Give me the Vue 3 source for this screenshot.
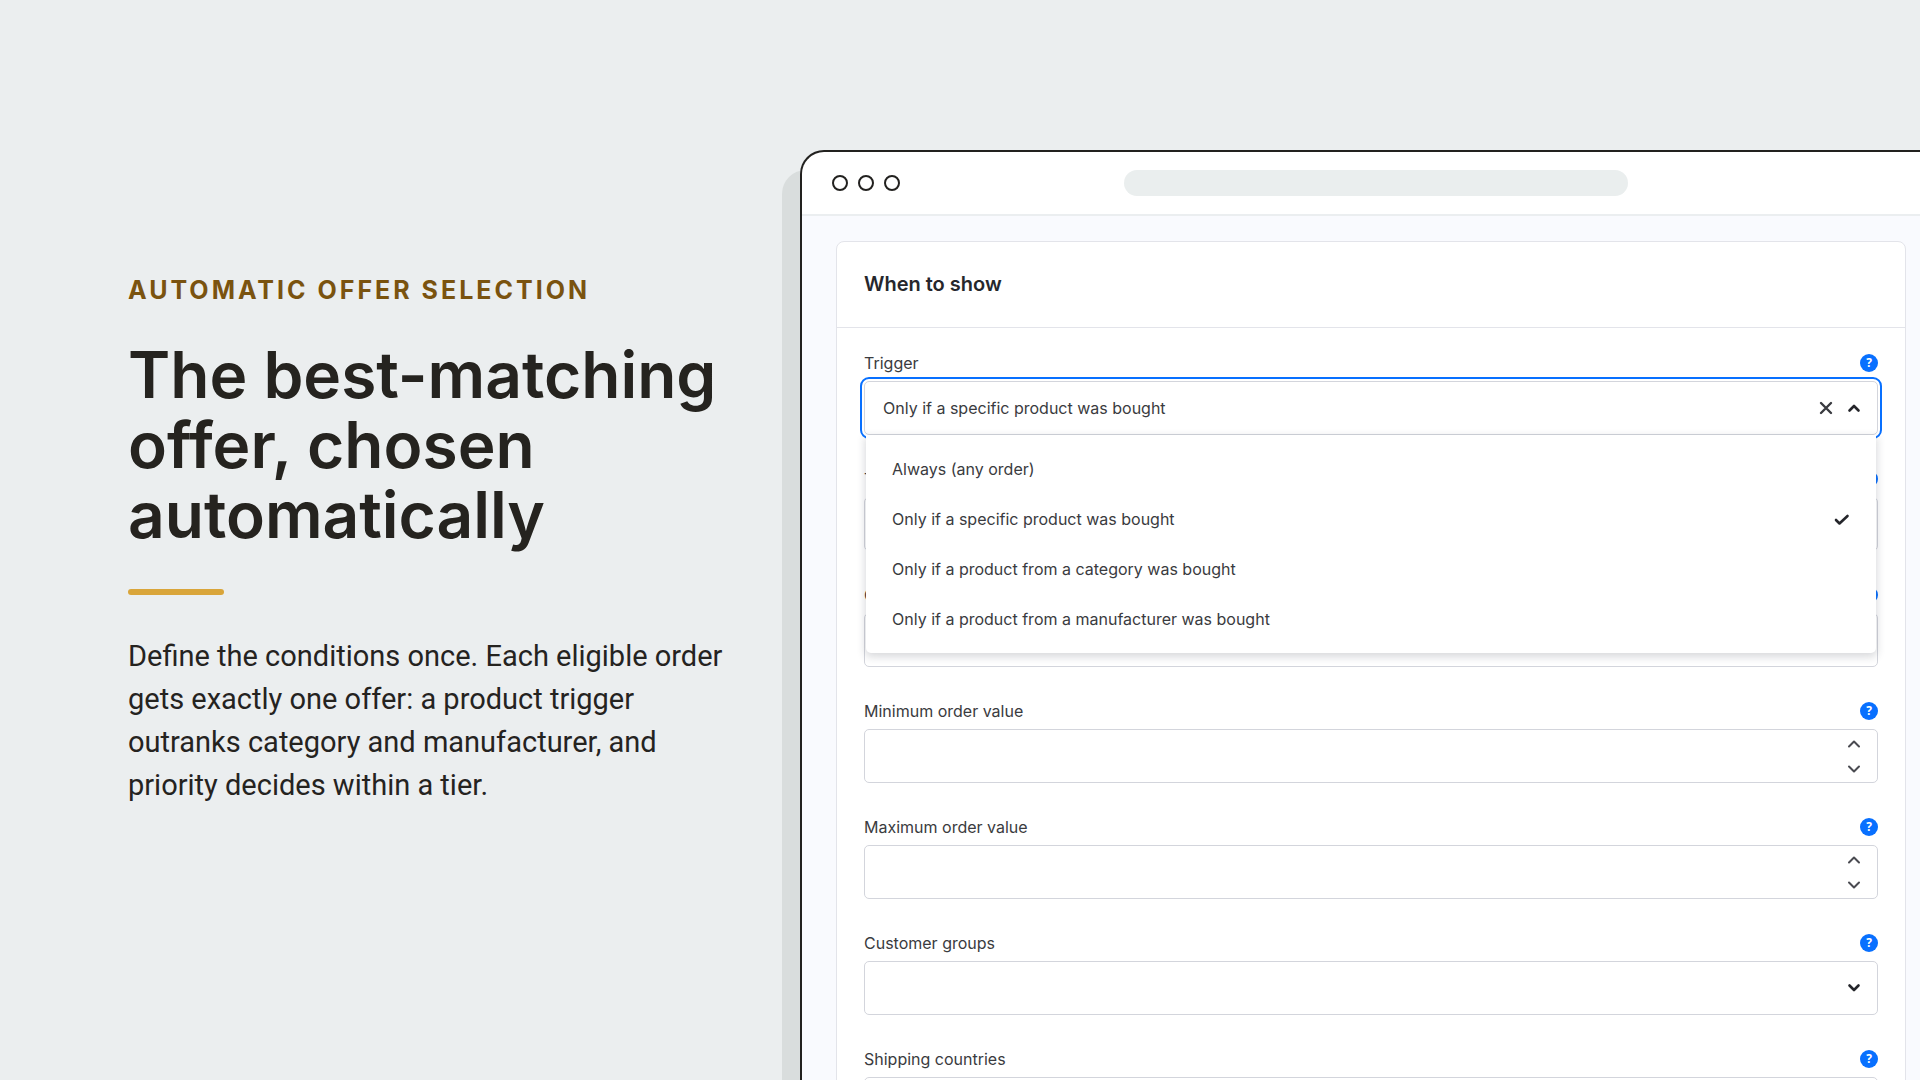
<template>
  <main class="slide">
    <section class="intro">
      <p class="eyebrow">AUTOMATIC OFFER SELECTION</p>
      <h1 class="headline">The best-matching<br />offer, chosen<br />automatically</h1>
      <div class="accent"></div>
      <p class="summary">
        Define the conditions once. Each eligible order<br />
        gets exactly one offer: a product trigger<br />
        outranks category and manufacturer, and<br />
        priority decides within a tier.
      </p>
    </section>

    <section class="browser">
      <header class="browser-bar">
        <div class="dots">
          <span v-for="n in 3" :key="n" class="dot"></span>
        </div>
        <div class="address"></div>
      </header>

      <div class="browser-body">
        <form class="card" @submit.prevent>
          <h2 class="card-title">When to show</h2>

          <div class="fields">
            <div v-for="field in fields" :key="field.id" class="field">
              <div class="field-head">
                <label :for="field.id">{{ field.label }}</label>
                <button type="button" class="help" :aria-label="'Help: ' + field.label">?</button>
              </div>

              <div class="control" :class="{ focused: field.id === 'trigger' }">
                <select v-if="field.type === 'trigger'" :id="field.id" v-model="trigger" class="input">
                  <option v-for="option in options" :key="option" :value="option">{{ option }}</option>
                </select>
                <select v-else-if="field.type === 'select'" :id="field.id" class="input"></select>
                <input v-else :id="field.id" type="text" inputmode="decimal" class="input" />

                <div v-if="field.type === 'trigger'" class="icons">
                  <button type="button" class="icon-btn" aria-label="Clear" @click="trigger = ''">
                    <svg width="16" height="16" viewBox="0 0 16 16"><path class="bold" d="M3 3l10 10M13 3L3 13" /></svg>
                  </button>
                  <button type="button" class="icon-btn" aria-label="Toggle options" @click="open = !open">
                    <svg width="16" height="16" viewBox="0 0 16 16"><path class="heavy" d="M3.5 10.5L8 6l4.5 4.5" /></svg>
                  </button>
                </div>
                <div v-else-if="field.type === 'select'" class="icons">
                  <svg width="16" height="16" viewBox="0 0 16 16"><path class="heavy" d="M3.5 5.5L8 10l4.5-4.5" /></svg>
                </div>
                <div v-else class="icons stepper">
                  <button type="button" class="icon-btn" aria-label="Increase">
                    <svg width="16" height="16" viewBox="0 0 16 16"><path d="M3 10.5l5-5 5 5" /></svg>
                  </button>
                  <button type="button" class="icon-btn" aria-label="Decrease">
                    <svg width="16" height="16" viewBox="0 0 16 16"><path d="M3 5.5l5 5 5-5" /></svg>
                  </button>
                </div>

                <ul v-if="field.type === 'trigger' && open" class="menu" role="listbox">
                  <li
                    v-for="option in options"
                    :key="option"
                    class="menu-item"
                    role="option"
                    :aria-selected="option === trigger"
                    @click="choose(option)"
                  >
                    {{ option }}
                    <svg v-if="option === trigger" width="16" height="16" viewBox="0 0 16 16">
                      <path class="heavy" d="M2 9l3.500 3.500L13.500 5" />
                    </svg>
                  </li>
                </ul>
              </div>
            </div>
          </div>
        </form>
      </div>
    </section>
  </main>
</template>

<script setup>
import { ref } from 'vue'

const options = [
  'Always (any order)',
  'Only if a specific product was bought',
  'Only if a product from a category was bought',
  'Only if a product from a manufacturer was bought',
]

const fields = [
  { id: 'trigger', label: 'Trigger', type: 'trigger' },
  { id: 'trigger-products', label: 'Trigger products', type: 'select' },
  { id: 'currency', label: 'Currency', type: 'select' },
  { id: 'min-value', label: 'Minimum order value', type: 'number' },
  { id: 'max-value', label: 'Maximum order value', type: 'number' },
  { id: 'customer-groups', label: 'Customer groups', type: 'select' },
  { id: 'countries', label: 'Shipping countries', type: 'select' },
]

const trigger = ref(options[1])
const open = ref(true)

const choose = (option) => {
  trigger.value = option
  open.value = false
}
</script>

<style>
body {
  background: #ebeeef;
}
</style>

<style scoped>
.slide {
  display: flex;
  height: 100vh;
  overflow: hidden;
  background: #ebeeef;
  color: #25231f;
  font-family: Inter, "Liberation Sans", sans-serif;
}

.intro {
  flex: 0 0 800px;
  box-sizing: border-box;
  padding-left: 128px;
  display: flex;
  flex-direction: column;
  justify-content: center;
  white-space: nowrap;
}

.eyebrow {
  margin: 0;
  color: #7a530f;
  font-size: 25px;
  line-height: 32px;
  font-weight: 700;
  letter-spacing: 3px;
}

.headline {
  margin: 34px 0 0;
  font-size: 64px;
  line-height: 70px;
  font-weight: 600;
}

.accent {
  width: 96px;
  height: 6px;
  margin: 39px 0 40px;
  border-radius: 3px;
  background: #d9a53a;
}

.summary {
  margin: 0;
  font-family: Roboto, "Liberation Sans", sans-serif;
  font-size: 29px;
  line-height: 43px;
}

.browser {
  flex: 1;
  min-width: 0;
  margin-top: 150px;
  border: 2px solid #22211f;
  border-width: 2px 0 0 2px;
  border-top-left-radius: 24px;
  background: #fff;
  box-shadow: -18px 20px 0 #d9dddd;
}

.browser-bar {
  display: flex;
  align-items: center;
  height: 62px;
  padding: 0 68px 0 30px;
  border-bottom: 2px solid #ebeef0;
}

.dots {
  display: flex;
  gap: 10px;
}

.dot {
  box-sizing: border-box;
  width: 16px;
  height: 16px;
  border: 2px solid #22211f;
  border-radius: 50%;
}

.address {
  width: 504px;
  height: 26px;
  margin: 0 auto;
  border-radius: 13px;
  background: #eaeeee;
}

.browser-body {
  padding: 25px 14px 0 34px;
  background: #f9fafe;
}

.card {
  border: 1px solid #e3e4ea;
  border-radius: 8px;
  background: #fff;
}

.card-title {
  margin: 0;
  padding: 28px 27px;
  border-bottom: 1px solid #e3e4ea;
  color: #26272c;
  font-size: 20px;
  line-height: 29px;
  font-weight: 600;
}

.fields {
  display: flex;
  flex-direction: column;
  gap: 32px;
  padding: 23px 27px;
}

.field {
  display: flex;
  flex-direction: column;
  gap: 6px;
}

.field-head {
  display: flex;
  align-items: center;
  justify-content: space-between;
  height: 24px;
  color: #3a3b40;
  font-size: 16px;
  line-height: 24px;
}

.help {
  width: 18px;
  height: 18px;
  padding: 0;
  border: 0;
  border-radius: 50%;
  background: #0870ff;
  color: #fff;
  font: 700 12px/18px "Noto Sans", sans-serif;
}

.control {
  position: relative;
  box-sizing: border-box;
  height: 54px;
  border: 1px solid #d3d5dc;
  border-radius: 5px;
  background: #fff;
}

.focused {
  z-index: 1;
  outline: 2px solid #0870ff;
  outline-offset: 2px;
}

.input {
  box-sizing: border-box;
  width: 100%;
  height: 100%;
  padding: 0 88px 0 18px;
  border: 0;
  outline: 0;
  appearance: none;
  background: transparent;
  color: #3a3b40;
  font: inherit;
  font-size: 16px;
}

.icons {
  position: absolute;
  top: 0;
  right: 15px;
  bottom: 0;
  display: flex;
  align-items: center;
  gap: 12px;
}

.stepper {
  flex-direction: column;
  justify-content: center;
  gap: 9px;
}

.icon-btn {
  display: flex;
  padding: 0;
  border: 0;
  background: none;
}

svg {
  display: block;
  fill: none;
  stroke: #4a4b51;
  stroke-width: 2;
  stroke-linecap: round;
  stroke-linejoin: round;
}

.bold {
  stroke: #3a3b40;
  stroke-width: 2.4;
}

.heavy {
  stroke: #25262b;
  stroke-width: 2.6;
}

.menu {
  position: absolute;
  top: 53px;
  left: 1px;
  right: 1px;
  margin: 0;
  padding: 9px 26px;
  list-style: none;
  border-radius: 0 0 5px 5px;
  background: #fff;
  box-shadow: 0 3px 8px 1px rgba(40, 42, 60, 0.18);
}

.menu-item {
  display: flex;
  align-items: center;
  justify-content: space-between;
  height: 50px;
  color: #3a3b40;
  font-size: 16px;
}
</style>
